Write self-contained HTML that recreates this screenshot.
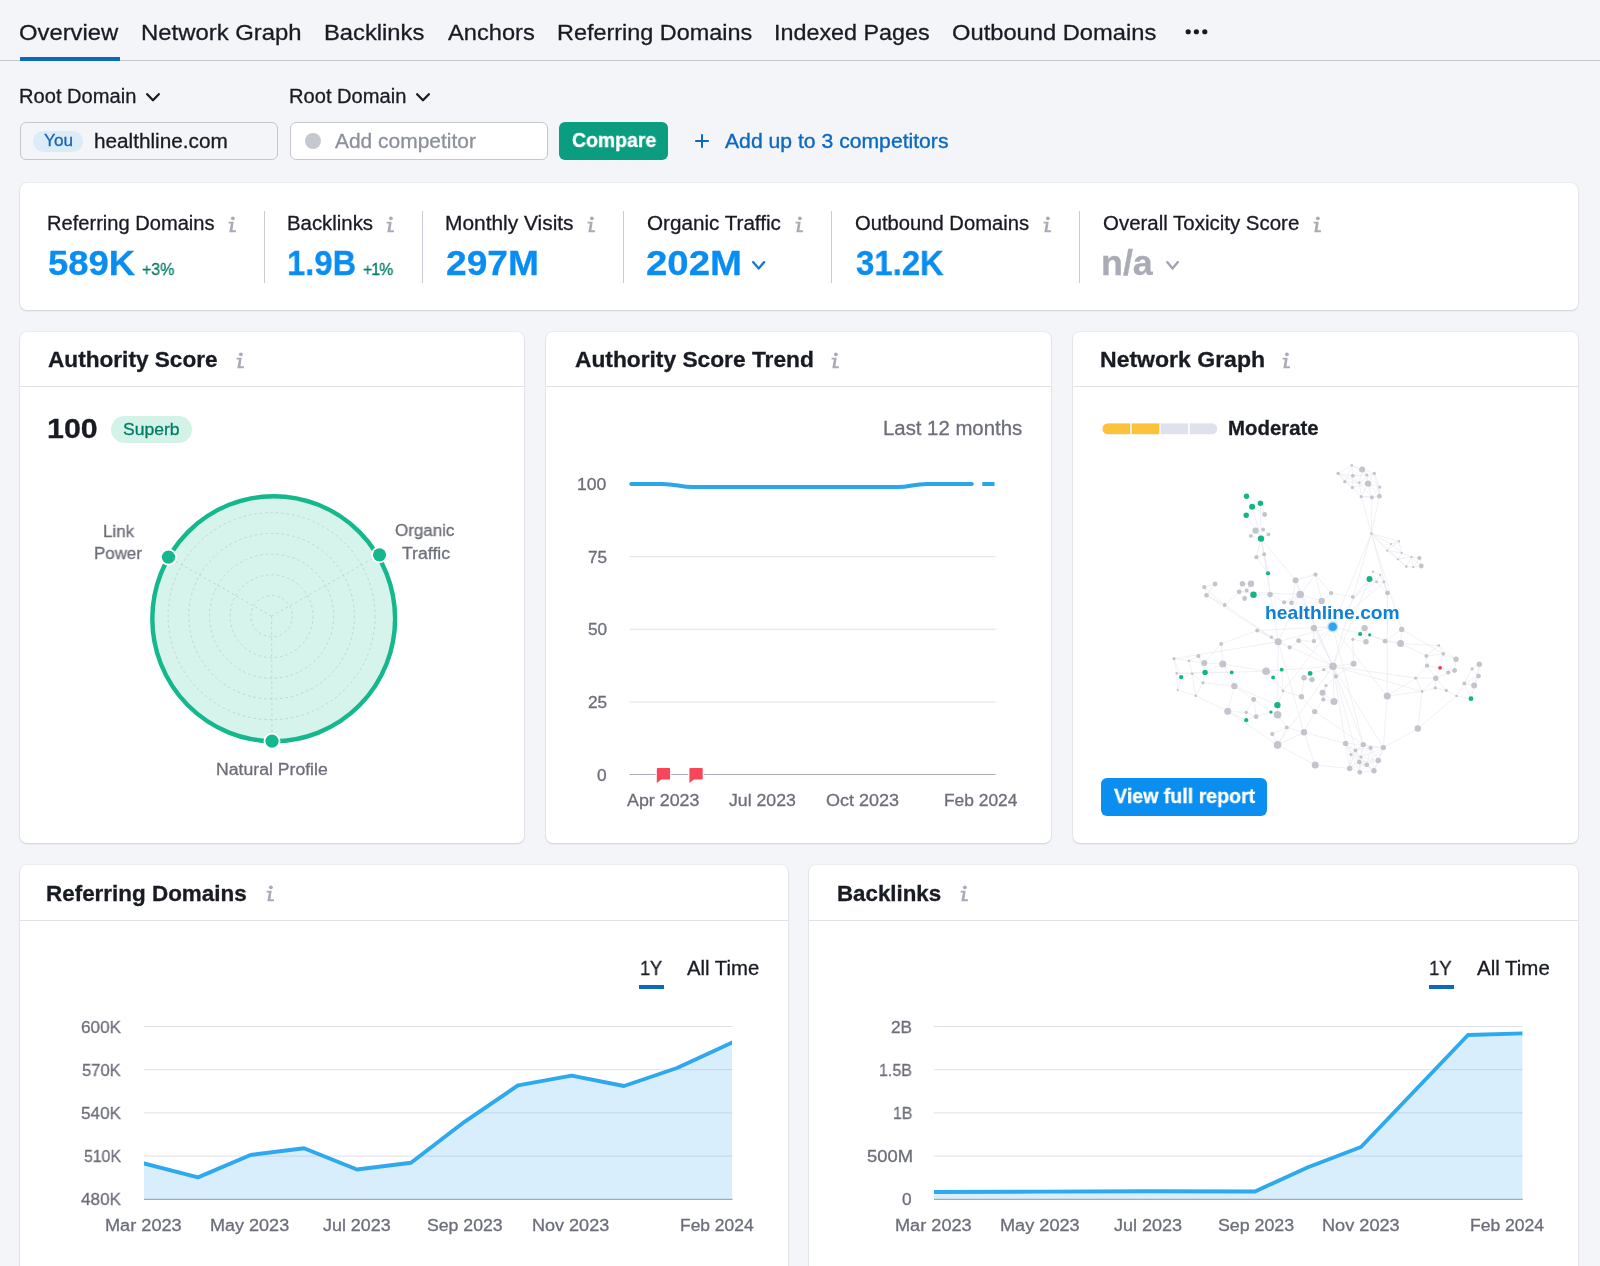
<!DOCTYPE html>
<html lang="en">
<head>
<meta charset="utf-8">
<title>Backlink Analytics: healthline.com – Overview</title>
<style>
*{box-sizing:border-box}
html,body{margin:0;padding:0;background:#f4f5f9}
body{width:1600px;height:1266px;overflow:hidden;font-family:"Liberation Sans", Arial, sans-serif;color:#191b23}
#app{position:relative;width:1600px;height:1266px;overflow:hidden;background:#f4f5f9}
.t{position:absolute;white-space:pre;line-height:1;display:block;transform-origin:0 0;will-change:transform;-webkit-text-stroke:0.3px currentColor}
.ico,.g{position:absolute;display:block;overflow:visible}
.g{left:0;top:0}
.abs{position:absolute}
.card{position:absolute;background:#fff;border-radius:7px;box-shadow:0 0 0 1px rgba(25,27,35,.035),0 1px 2px rgba(25,27,35,.13);overflow:hidden}
.hr{position:absolute;left:0;right:0;height:1px;background:#e0e1e9}
.sep{position:absolute;width:1px;background:#c9ccd4;top:27.5px;height:72px}
nav{position:absolute;left:0;top:0;width:1600px;height:61px;border-bottom:1px solid #c4c7cf}
nav .ul{position:absolute;left:20px;top:57px;width:99.5px;height:4px;background:#0b69c0}
.inp{position:absolute;height:38px;border:1px solid #c4c7cf;border-radius:6px}
.btn{position:absolute;border-radius:6px;border:0;padding:0;margin:0;font:inherit;color:inherit;display:block;cursor:pointer}
.pill{position:absolute;border-radius:14px}
</style>
</head>
<body>
<div id="app">
<nav>
<span class="t" style="left:18.94px;top:22px;font-size:22.5px;transform:scaleX(1.0586);">Overview</span>
<span class="t" style="left:141.44px;top:22px;font-size:22.5px;transform:scaleX(1.0615);">Network Graph</span>
<span class="t" style="left:323.94px;top:22px;font-size:22.5px;transform:scaleX(1.0556);">Backlinks</span>
<span class="t" style="left:448.00px;top:22px;font-size:22.5px;transform:scaleX(1.0512);">Anchors</span>
<span class="t" style="left:556.96px;top:22px;font-size:22.5px;transform:scaleX(1.0412);">Referring Domains</span>
<span class="t" style="left:773.93px;top:22px;font-size:22.5px;transform:scaleX(1.0367);">Indexed Pages</span>
<span class="t" style="left:951.95px;top:22px;font-size:22.5px;transform:scaleX(1.0539);">Outbound Domains</span>
<div class="ul"></div>
<svg class="ico" style="left:1183px;top:27px" width="28" height="10" viewBox="0 0 28 10"><g fill="#191b23"><circle cx="5.2" cy="4.75" r="2.6"/><circle cx="13.4" cy="4.75" r="2.6"/><circle cx="21.8" cy="4.75" r="2.6"/></g></svg>
</nav>
<div id="filters">
<div class="inp" style="left:20px;top:122px;width:258px;background:#f4f5f9"></div>
<div class="pill" style="left:32.5px;top:130.5px;width:50px;height:21px;background:#dcebf8"><span class="t" style="left:11.00px;top:1px;font-size:16.3px;transform:scaleX(1.0561);color:#1467b8;">You</span></div>
<div class="inp" style="left:289.5px;top:122px;width:258px;background:#fff"></div>
<div class="abs" style="left:304.6px;top:133px;width:16.2px;height:16.2px;border-radius:50%;background:#c6c8d0"></div>
<button type="button" class="btn" style="left:559px;top:122px;width:109px;height:38px;background:#0a9d80"><span class="t" style="left:12.80px;top:8px;font-size:20.3px;transform:scaleX(0.9574);font-weight:700;color:#ffffff;">Compare</span></button>
<svg class="ico" style="left:142.9px;top:90.2px" width="19.9" height="14.4" viewBox="142.9 90.2 19.9 14.4"><polyline points="147.1,94.4 152.9,100.4 158.7,94.4" fill="none" stroke="#191b23" stroke-width="2.3" stroke-linecap="round" stroke-linejoin="round"/></svg>
<svg class="ico" style="left:412.8px;top:90.2px" width="20.0" height="14.4" viewBox="412.8 90.2 20.0 14.4"><polyline points="416.9,94.4 422.8,100.4 428.7,94.4" fill="none" stroke="#191b23" stroke-width="2.3" stroke-linecap="round" stroke-linejoin="round"/></svg>
<svg class="ico" style="left:694px;top:133px" width="16" height="16" viewBox="0 0 16 16"><path d="M8 1.2V14.8M1.2 8H14.8" stroke="#0b69c0" stroke-width="2" fill="none"/></svg>
<span class="t" style="left:18.99px;top:86px;font-size:20px;transform:scaleX(1.0053);">Root Domain</span>
<span class="t" style="left:288.79px;top:86px;font-size:20px;transform:scaleX(1.0053);">Root Domain</span>
<span class="t" style="left:93.96px;top:131px;font-size:20px;transform:scaleX(1.0369);">healthline.com</span>
<span class="t" style="left:335.40px;top:131px;font-size:20.3px;transform:scaleX(1.0326);color:#8c909c;">Add competitor</span>
<span class="t" style="left:724.50px;top:131px;font-size:20px;transform:scaleX(1.0581);color:#0b69c0;-webkit-text-stroke:0.35px #0b69c0;">Add up to 3 competitors</span>
</div>
<section class="card" id="stats" style="left:20px;top:183px;width:1558px;height:127px;">
<div class="sep" style="left:243.8px"></div>
<div class="sep" style="left:402.1px"></div>
<div class="sep" style="left:602.9px"></div>
<div class="sep" style="left:810.8px"></div>
<div class="sep" style="left:1059.0px"></div>
<svg class="ico" style="left:207.5px;top:32.5px" width="9" height="17" viewBox="0 0 9 17"><circle cx="4.9" cy="2.3" r="1.9" fill="#a9abb6"/><path d="M0.6 5.7H5.7L4.4 14.3H7.9V16.2H1.3L2.9 7.6H0.6Z" fill="#a9abb6"/></svg>
<svg class="ico" style="left:366.0px;top:32.5px" width="9" height="17" viewBox="0 0 9 17"><circle cx="4.9" cy="2.3" r="1.9" fill="#a9abb6"/><path d="M0.6 5.7H5.7L4.4 14.3H7.9V16.2H1.3L2.9 7.6H0.6Z" fill="#a9abb6"/></svg>
<svg class="ico" style="left:567.0px;top:32.5px" width="9" height="17" viewBox="0 0 9 17"><circle cx="4.9" cy="2.3" r="1.9" fill="#a9abb6"/><path d="M0.6 5.7H5.7L4.4 14.3H7.9V16.2H1.3L2.9 7.6H0.6Z" fill="#a9abb6"/></svg>
<svg class="ico" style="left:774.5px;top:32.5px" width="9" height="17" viewBox="0 0 9 17"><circle cx="4.9" cy="2.3" r="1.9" fill="#a9abb6"/><path d="M0.6 5.7H5.7L4.4 14.3H7.9V16.2H1.3L2.9 7.6H0.6Z" fill="#a9abb6"/></svg>
<svg class="ico" style="left:1023.0px;top:32.5px" width="9" height="17" viewBox="0 0 9 17"><circle cx="4.9" cy="2.3" r="1.9" fill="#a9abb6"/><path d="M0.6 5.7H5.7L4.4 14.3H7.9V16.2H1.3L2.9 7.6H0.6Z" fill="#a9abb6"/></svg>
<svg class="ico" style="left:1292.5px;top:32.5px" width="9" height="17" viewBox="0 0 9 17"><circle cx="4.9" cy="2.3" r="1.9" fill="#a9abb6"/><path d="M0.6 5.7H5.7L4.4 14.3H7.9V16.2H1.3L2.9 7.6H0.6Z" fill="#a9abb6"/></svg>
<svg class="ico" style="left:729.0px;top:75.2px" width="19.4" height="14.6" viewBox="749.0 258.2 19.4 14.6"><polyline points="753.1,262.3 758.7,268.7 764.2,262.3" fill="none" stroke="#1479d0" stroke-width="2.3" stroke-linecap="round" stroke-linejoin="round"/></svg>
<svg class="ico" style="left:1142.5px;top:75.2px" width="19.1" height="14.6" viewBox="1162.5 258.2 19.1 14.6"><polyline points="1166.7,262.3 1172.0,268.7 1177.4,262.3" fill="none" stroke="#a0a3ae" stroke-width="2.3" stroke-linecap="round" stroke-linejoin="round"/></svg>
<span class="t" style="left:27.00px;top:30px;font-size:20px;transform:scaleX(1.0047);">Referring Domains</span>
<span class="t" style="left:266.98px;top:30px;font-size:20px;transform:scaleX(1.0183);">Backlinks</span>
<span class="t" style="left:425.20px;top:30px;font-size:20px;transform:scaleX(1.0450);">Monthly Visits</span>
<span class="t" style="left:627.00px;top:30px;font-size:20px;transform:scaleX(1.0324);">Organic Traffic</span>
<span class="t" style="left:835.00px;top:30px;font-size:20px;transform:scaleX(1.0097);">Outbound Domains</span>
<span class="t" style="left:1083.00px;top:30px;font-size:20px;transform:scaleX(1.0226);">Overall Toxicity Score</span>
<span class="t" style="left:27.71px;top:62px;font-size:35px;transform:scaleX(1.0407);font-weight:700;color:#0a8df2;">589K</span>
<span class="t" style="left:266.63px;top:62px;font-size:35px;transform:scaleX(0.9341);font-weight:700;color:#0a8df2;">1.9B</span>
<span class="t" style="left:426.04px;top:62px;font-size:35px;transform:scaleX(1.0605);font-weight:700;color:#0a8df2;">297M</span>
<span class="t" style="left:626.40px;top:62px;font-size:35px;transform:scaleX(1.0960);font-weight:700;color:#0a8df2;">202M</span>
<span class="t" style="left:835.50px;top:62px;font-size:35px;transform:scaleX(0.9396);font-weight:700;color:#0a8df2;">31.2K</span>
<span class="t" style="left:1081.45px;top:62px;font-size:35px;transform:scaleX(1.0233);font-weight:700;color:#a9abb6;">n/a</span>
<span class="t" style="left:122.20px;top:78px;font-size:17.3px;transform:scaleX(0.9221);color:#007c65;">+3%</span>
<span class="t" style="left:342.50px;top:78px;font-size:17.3px;transform:scaleX(0.9200);letter-spacing:-1.047px;color:#007c65;">+1%</span>
</section>
<section class="card" id="authority-score" style="left:20px;top:332px;width:504px;height:511px;">
<div class="hr" style="top:54px"></div>
<svg class="ico" style="left:215.5px;top:19.5px" width="9" height="17" viewBox="0 0 9 17"><circle cx="4.9" cy="2.3" r="1.9" fill="#a9abb6"/><path d="M0.6 5.7H5.7L4.4 14.3H7.9V16.2H1.3L2.9 7.6H0.6Z" fill="#a9abb6"/></svg>
<div class="pill" style="left:90.5px;top:83.5px;width:81.5px;height:27px;background:#d3f3e9"><span class="t" style="left:12.50px;top:5px;font-size:17.3px;transform:scaleX(1.0161);color:#007c65;">Superb</span></div>
<svg class="g" width="504" height="511" viewBox="20 332 504 511">
<ellipse cx="273.7" cy="618.7" rx="121.4" ry="122.5" fill="#d6f4eb"/>
<g fill="none" stroke="#b9dcd2" stroke-width="1" stroke-dasharray="2.6 2.8">
<circle cx="271.6" cy="616.2" r="20.7"/>
<circle cx="271.6" cy="616.2" r="41.4"/>
<circle cx="271.6" cy="616.2" r="62.1"/>
<circle cx="271.6" cy="616.2" r="82.8"/>
<circle cx="271.6" cy="616.2" r="103.5"/>
<line x1="271.6" y1="616.2" x2="168.5" y2="557.2"/>
<line x1="271.6" y1="616.2" x2="379.5" y2="554.8"/>
<line x1="271.6" y1="616.2" x2="272.0" y2="741.2"/>
</g>
<ellipse cx="273.7" cy="618.7" rx="121.4" ry="122.5" fill="none" stroke="#14b88c" stroke-width="4.4"/>
<circle cx="168.5" cy="557.2" r="8.4" fill="#fff"/><circle cx="168.5" cy="557.2" r="6.6" fill="#14b88c"/>
<circle cx="379.5" cy="554.8" r="8.4" fill="#fff"/><circle cx="379.5" cy="554.8" r="6.6" fill="#14b88c"/>
<circle cx="272.0" cy="741.2" r="8.4" fill="#fff"/><circle cx="272.0" cy="741.2" r="6.6" fill="#14b88c"/>
</svg>
<span class="t" style="left:28.00px;top:17px;font-size:21.8px;transform:scaleX(1.0375);font-weight:700;">Authority Score</span>
<span class="t" style="left:27.41px;top:83px;font-size:28px;transform:scaleX(1.0854);font-weight:700;">100</span>
<span class="t" style="left:82.92px;top:191px;font-size:17.3px;transform:scaleX(0.9819);color:#6c6e79;">Link</span>
<span class="t" style="left:74.42px;top:213px;font-size:17.3px;transform:scaleX(0.9787);color:#6c6e79;">Power</span>
<span class="t" style="left:375.20px;top:190px;font-size:17.3px;transform:scaleX(0.9824);color:#6c6e79;">Organic</span>
<span class="t" style="left:381.80px;top:213px;font-size:17.3px;transform:scaleX(1.0209);color:#6c6e79;">Traffic</span>
<span class="t" style="left:195.88px;top:429px;font-size:17.3px;transform:scaleX(1.0206);color:#6c6e79;">Natural Profile</span>
</section>
<section class="card" id="authority-trend" style="left:546px;top:332px;width:505px;height:511px;">
<div class="hr" style="top:54px"></div>
<svg class="ico" style="left:284.7px;top:19.5px" width="9" height="17" viewBox="0 0 9 17"><circle cx="4.9" cy="2.3" r="1.9" fill="#a9abb6"/><path d="M0.6 5.7H5.7L4.4 14.3H7.9V16.2H1.3L2.9 7.6H0.6Z" fill="#a9abb6"/></svg>
<svg class="g" width="505" height="511" viewBox="546 332 505 511">
<line x1="629.4" x2="995.5" y1="556.7" y2="556.7" stroke="#e0e1e9" stroke-width="1"/>
<line x1="629.4" x2="995.5" y1="629.2" y2="629.2" stroke="#e0e1e9" stroke-width="1"/>
<line x1="629.4" x2="995.5" y1="702.0" y2="702.0" stroke="#e0e1e9" stroke-width="1"/>
<line x1="629.4" x2="995.5" y1="774.5" y2="774.5" stroke="#a9abb6" stroke-width="1"/>
<path d="M631.2 483.9 H662 C676 483.9 680 487.1 693 487.1 H897 C911 487.1 913 483.9 927 483.9 H971.8" fill="none" stroke="#2ba6ea" stroke-width="4" stroke-linecap="round"/>
<path d="M982.3 483.9 H994.5" fill="none" stroke="#2ba6ea" stroke-width="4"/>
<path d="M656.8 769.1 a1 1 0 0 1 1 -1 h11.3 a1 1 0 0 1 1 1 v9.5 a1 1 0 0 1 -1 1 h-7.8 l-4.5 3.5 z" fill="#f7455a" stroke="#fff" stroke-width="2.4" paint-order="stroke" stroke-linejoin="round"/>
<path d="M689.4 769.1 a1 1 0 0 1 1 -1 h11.3 a1 1 0 0 1 1 1 v9.5 a1 1 0 0 1 -1 1 h-7.8 l-4.5 3.5 z" fill="#f7455a" stroke="#fff" stroke-width="2.4" paint-order="stroke" stroke-linejoin="round"/>
</svg>
<span class="t" style="left:28.80px;top:17px;font-size:21.8px;transform:scaleX(1.0436);font-weight:700;">Authority Score Trend</span>
<span class="t" style="left:337.48px;top:86px;font-size:20px;transform:scaleX(1.0173);color:#6c6e79;">Last 12 months</span>
<span class="t" style="left:31.28px;top:144px;font-size:17.3px;transform:scaleX(1.0176);color:#6c6e79;">100</span>
<span class="t" style="left:41.50px;top:217px;font-size:17.3px;transform:scaleX(0.9940);color:#6c6e79;">75</span>
<span class="t" style="left:41.50px;top:289px;font-size:17.3px;transform:scaleX(0.9940);color:#6c6e79;">50</span>
<span class="t" style="left:41.50px;top:362px;font-size:17.3px;transform:scaleX(0.9940);color:#6c6e79;">25</span>
<span class="t" style="left:51.00px;top:435px;font-size:17.3px;color:#6c6e79;">0</span>
<span class="t" style="left:80.60px;top:460px;font-size:17.3px;transform:scaleX(1.0327);color:#6c6e79;">Apr 2023</span>
<span class="t" style="left:182.75px;top:460px;font-size:17.3px;transform:scaleX(1.0236);color:#6c6e79;">Jul 2023</span>
<span class="t" style="left:279.60px;top:460px;font-size:17.3px;transform:scaleX(1.0415);color:#6c6e79;">Oct 2023</span>
<span class="t" style="left:397.99px;top:460px;font-size:17.3px;transform:scaleX(1.0054);color:#6c6e79;">Feb 2024</span>
</section>
<section class="card" id="network-graph" style="left:1073px;top:332px;width:505px;height:511px;">
<div class="hr" style="top:54px"></div>
<svg class="ico" style="left:209.2px;top:19.5px" width="9" height="17" viewBox="0 0 9 17"><circle cx="4.9" cy="2.3" r="1.9" fill="#a9abb6"/><path d="M0.6 5.7H5.7L4.4 14.3H7.9V16.2H1.3L2.9 7.6H0.6Z" fill="#a9abb6"/></svg>
<svg class="g" width="505" height="511" viewBox="1073 332 505 511">
<clipPath id="mclip"><rect x="1102.4" y="423.2" width="114.9" height="11.2" rx="5.6"/></clipPath><g clip-path="url(#mclip)">
<rect x="1102.2" y="423.2" width="28.0" height="11.2" fill="#fbc23c"/>
<rect x="1131.8" y="423.2" width="27.6" height="11.2" fill="#fbc23c"/>
<rect x="1160.6" y="423.2" width="27.5" height="11.2" fill="#dfe1ec"/>
<rect x="1189.7" y="423.2" width="27.7" height="11.2" fill="#dfe1ec"/>
</g>
<g stroke="#eaebef" stroke-width="0.7" fill="none">
<path d="M1246.5 496.2L1252.1 506.7M1246.5 496.2L1260.4 503.2M1252.1 506.7L1260.4 503.2M1252.1 506.7L1246.2 515.3M1252.1 506.7L1261.0 538.6M1252.1 506.7L1264.7 514.5M1260.4 503.2L1261.0 538.6M1260.4 503.2L1264.7 514.5M1246.2 515.3L1255.6 530.6M1261.0 538.6L1268.0 573.3M1261.0 538.6L1255.6 530.6M1261.0 538.6L1263.1 529.5M1261.0 538.6L1250.8 535.9M1261.0 538.6L1268.5 534.3M1261.0 538.6L1264.2 554.2M1261.0 538.6L1256.4 557.2M1261.0 538.6L1295.6 580.3M1261.0 538.6L1278.2 641.8M1268.0 573.3L1264.2 554.2M1268.0 573.3L1256.4 557.2M1268.0 573.3L1270.1 594.5M1253.5 594.8L1246.7 590.5M1253.5 594.8L1244.6 598.5M1253.5 594.8L1270.1 594.5M1369.5 578.9L1373.0 571.7M1369.5 578.9L1376.5 581.9M1369.5 578.9L1352.8 596.9M1369.5 578.9L1333.0 666.2M1369.5 578.9L1332.7 626.7M1360.1 634.0L1364.6 628.1M1360.1 634.0L1352.8 639.3M1360.1 634.0L1366.0 641.8M1369.7 634.8L1364.6 628.1M1369.7 634.8L1366.0 641.8M1369.7 634.8L1385.1 641.2M1205.1 672.4L1231.7 672.4M1205.1 672.4L1198.4 656.0M1205.1 672.4L1204.3 663.0M1205.1 672.4L1222.8 664.0M1205.1 672.4L1192.2 673.7M1205.1 672.4L1203.0 682.8M1231.7 672.4L1222.8 664.0M1231.7 672.4L1234.4 686.1M1181.2 677.2L1174.0 658.7M1181.2 677.2L1176.7 673.2M1181.2 677.2L1192.2 673.7M1181.2 677.2L1177.7 690.1M1281.7 669.7L1273.1 677.5M1281.7 669.7L1266.1 671.3M1281.7 669.7L1283.0 690.9M1273.1 677.5L1266.1 671.3M1273.1 677.5L1283.0 690.9M1310.1 673.4L1323.8 669.7M1310.1 673.4L1304.0 677.7M1310.1 673.4L1312.0 679.6M1277.4 705.1L1270.9 712.1M1277.4 705.1L1234.4 686.1M1277.4 705.1L1283.0 690.9M1277.4 705.1L1277.6 714.8M1270.9 712.1L1253.7 699.5M1270.9 712.1L1256.1 716.7M1270.9 712.1L1277.6 714.8M1246.2 720.2L1227.7 711.3M1246.2 720.2L1246.2 712.4M1246.2 720.2L1256.1 716.7M1471.0 698.7L1464.3 683.4M1471.0 698.7L1474.2 685.5M1471.0 698.7L1456.5 696.0M1440.1 667.8L1443.3 653.8M1440.1 667.8L1427.0 665.7M1440.1 667.8L1454.6 670.5M1440.1 667.8L1448.2 672.6M1440.1 667.8L1435.8 678.3M1351.8 465.3L1362.2 469.6M1351.8 465.3L1338.1 473.4M1351.8 465.3L1352.8 475.8M1351.8 465.3L1366.8 475.0M1351.8 465.3L1344.8 481.7M1362.2 469.6L1374.3 473.4M1362.2 469.6L1352.8 475.8M1362.2 469.6L1366.8 475.0M1362.2 469.6L1359.3 482.8M1338.1 473.4L1352.8 475.8M1338.1 473.4L1344.8 481.7M1338.1 473.4L1359.3 482.8M1338.1 473.4L1352.3 487.6M1374.3 473.4L1366.8 475.0M1374.3 473.4L1368.1 483.6M1374.3 473.4L1359.3 482.8M1374.3 473.4L1379.7 487.1M1374.3 473.4L1379.4 496.2M1352.8 475.8L1366.8 475.0M1352.8 475.8L1344.8 481.7M1352.8 475.8L1359.3 482.8M1352.8 475.8L1352.3 487.6M1366.8 475.0L1368.1 483.6M1366.8 475.0L1359.3 482.8M1366.8 475.0L1379.7 487.1M1344.8 481.7L1359.3 482.8M1344.8 481.7L1352.3 487.6M1368.1 483.6L1359.3 482.8M1368.1 483.6L1352.3 487.6M1368.1 483.6L1379.7 487.1M1368.1 483.6L1361.2 496.7M1368.1 483.6L1371.9 497.5M1368.1 483.6L1379.4 496.2M1359.3 482.8L1352.3 487.6M1359.3 482.8L1361.2 496.7M1359.3 482.8L1371.9 497.5M1352.3 487.6L1361.2 496.7M1379.7 487.1L1371.9 497.5M1379.7 487.1L1379.4 496.2M1361.2 496.7L1371.9 497.5M1361.2 496.7L1379.4 496.2M1361.2 496.7L1371.4 533.5M1371.9 497.5L1379.4 496.2M1371.9 497.5L1371.4 533.5M1379.4 496.2L1371.4 533.5M1255.6 530.6L1263.1 529.5M1255.6 530.6L1250.8 535.9M1263.1 529.5L1268.5 534.3M1264.2 554.2L1256.4 557.2M1371.4 533.5L1391.0 544.0M1371.4 533.5L1399.0 541.3M1371.4 533.5L1387.2 550.7M1371.4 533.5L1406.3 566.6M1371.4 533.5L1387.5 593.1M1371.4 533.5L1401.7 629.4M1371.4 533.5L1333.0 666.2M1371.4 533.5L1332.7 626.7M1391.0 544.0L1399.0 541.3M1391.0 544.0L1387.2 550.7M1391.0 544.0L1401.7 552.9M1399.0 541.3L1387.2 550.7M1399.0 541.3L1401.7 552.9M1387.2 550.7L1401.7 552.9M1387.2 550.7L1397.9 559.3M1401.7 552.9L1397.9 559.3M1401.7 552.9L1411.4 556.9M1397.9 559.3L1411.4 556.9M1397.9 559.3L1406.3 566.6M1411.4 556.9L1419.4 558.0M1411.4 556.9L1406.3 566.6M1411.4 556.9L1413.3 567.1M1411.4 556.9L1421.3 566.0M1419.4 558.0L1413.3 567.1M1419.4 558.0L1421.3 566.0M1406.3 566.6L1413.3 567.1M1413.3 567.1L1421.3 566.0M1373.0 571.7L1380.2 574.9M1373.0 571.7L1376.5 581.9M1380.2 574.9L1376.5 581.9M1380.2 574.9L1384.0 581.9M1380.2 574.9L1387.5 593.1M1376.5 581.9L1384.0 581.9M1376.5 581.9L1352.8 596.9M1376.5 581.9L1387.5 593.1M1384.0 581.9L1387.5 593.1M1384.0 581.9L1332.7 626.7M1315.5 574.6L1295.6 580.3M1315.5 574.6L1300.2 594.5M1315.5 574.6L1331.1 593.1M1315.5 574.6L1321.7 600.9M1295.6 580.3L1300.2 594.5M1295.6 580.3L1291.6 602.8M1295.6 580.3L1333.0 666.2M1251.0 583.7L1242.4 583.7M1251.0 583.7L1246.7 590.5M1242.4 583.7L1239.2 591.8M1242.4 583.7L1246.7 590.5M1215.1 584.0L1204.3 587.2M1215.1 584.0L1206.5 595.3M1204.3 587.2L1206.5 595.3M1204.3 587.2L1224.7 605.0M1206.5 595.3L1224.7 605.0M1206.5 595.3L1278.2 641.8M1239.2 591.8L1246.7 590.5M1239.2 591.8L1244.6 598.5M1239.2 591.8L1224.7 605.0M1239.2 591.8L1300.2 594.5M1246.7 590.5L1244.6 598.5M1270.1 594.5L1284.1 602.3M1224.7 605.0L1278.2 641.8M1300.2 594.5L1321.7 600.9M1300.2 594.5L1284.1 602.3M1300.2 594.5L1291.6 602.8M1300.2 594.5L1278.2 641.8M1300.2 594.5L1333.0 666.2M1300.2 594.5L1332.7 626.7M1331.1 593.1L1321.7 600.9M1331.1 593.1L1352.8 596.9M1387.5 593.1L1387.2 696.0M1284.1 602.3L1291.6 602.8M1313.9 628.1L1313.9 641.2M1313.9 628.1L1333.0 666.2M1313.9 628.1L1332.7 626.7M1364.6 628.1L1366.0 641.8M1401.7 629.4L1385.1 641.2M1401.7 629.4L1400.6 643.6M1401.7 629.4L1443.3 653.8M1257.2 630.5L1271.5 637.2M1257.2 630.5L1278.2 641.8M1257.2 630.5L1221.2 643.9M1257.2 630.5L1332.7 626.7M1271.5 637.2L1278.2 641.8M1278.2 641.8L1289.7 647.4M1278.2 641.8L1333.0 666.2M1278.2 641.8L1174.0 658.7M1278.2 641.8L1277.6 714.8M1278.2 641.8L1304.0 732.3M1278.2 641.8L1332.7 626.7M1298.6 640.7L1313.9 641.2M1298.6 640.7L1289.7 647.4M1298.6 640.7L1333.0 666.2M1313.9 641.2L1332.7 626.7M1352.8 639.3L1366.0 641.8M1352.8 639.3L1353.6 663.8M1385.1 641.2L1400.6 643.6M1400.6 643.6L1438.8 645.5M1400.6 643.6L1426.4 656.0M1400.6 643.6L1332.7 626.7M1221.2 643.9L1204.3 663.0M1221.2 643.9L1222.8 664.0M1333.0 666.2L1353.6 663.8M1333.0 666.2L1323.8 669.7M1333.0 666.2L1335.9 676.4M1333.0 666.2L1266.1 671.3M1333.0 666.2L1334.0 701.6M1333.0 666.2L1277.6 744.9M1333.0 666.2L1415.7 678.0M1333.0 666.2L1422.1 691.4M1333.0 666.2L1345.6 743.5M1333.0 666.2L1363.3 744.6M1333.0 666.2L1383.4 747.6M1333.0 666.2L1355.5 750.3M1353.6 663.8L1335.9 676.4M1323.8 669.7L1335.9 676.4M1335.9 676.4L1326.0 685.5M1266.1 671.3L1222.8 664.0M1266.1 671.3L1176.7 673.2M1304.0 677.7L1312.0 679.6M1304.0 677.7L1301.5 696.8M1174.0 658.7L1189.0 660.8M1174.0 658.7L1176.7 673.2M1189.0 660.8L1198.4 656.0M1189.0 660.8L1204.3 663.0M1189.0 660.8L1192.2 673.7M1198.4 656.0L1204.3 663.0M1204.3 663.0L1222.8 664.0M1222.8 664.0L1234.4 686.1M1176.7 673.2L1192.2 673.7M1176.7 673.2L1177.7 690.1M1192.2 673.7L1203.0 682.8M1192.2 673.7L1195.7 695.7M1203.0 682.8L1195.7 695.7M1203.0 682.8L1234.4 686.1M1177.7 690.1L1195.7 695.7M1195.7 695.7L1227.7 711.3M1234.4 686.1L1253.7 699.5M1234.4 686.1L1227.7 711.3M1326.0 685.5L1322.5 692.8M1326.0 685.5L1323.3 699.5M1322.5 692.8L1323.3 699.5M1322.5 692.8L1334.0 701.6M1301.5 696.8L1283.0 690.9M1301.5 696.8L1314.7 711.6M1323.3 699.5L1334.0 701.6M1323.3 699.5L1314.7 711.6M1253.7 699.5L1246.2 712.4M1253.7 699.5L1256.1 716.7M1283.0 690.9L1332.7 626.7M1314.7 711.6L1304.0 732.3M1314.7 711.6L1363.3 744.6M1227.7 711.3L1246.2 712.4M1227.7 711.3L1277.6 744.9M1246.2 712.4L1256.1 716.7M1277.6 714.8L1286.8 727.4M1286.8 727.4L1272.3 734.1M1286.8 727.4L1304.0 732.3M1286.8 727.4L1277.6 744.9M1272.3 734.1L1277.6 744.9M1304.0 732.3L1277.6 744.9M1304.0 732.3L1315.2 765.0M1304.0 732.3L1345.6 743.5M1277.6 744.9L1315.2 765.0M1315.2 765.0L1349.6 768.5M1387.2 696.0L1415.7 678.0M1387.2 696.0L1422.1 691.4M1387.2 696.0L1383.4 747.6M1387.2 696.0L1332.7 626.7M1417.8 728.5L1422.1 691.4M1417.8 728.5L1456.5 696.0M1417.8 728.5L1383.4 747.6M1438.8 645.5L1443.3 653.8M1438.8 645.5L1426.4 656.0M1438.8 645.5L1456.0 659.2M1443.3 653.8L1426.4 656.0M1443.3 653.8L1456.0 659.2M1426.4 656.0L1427.0 665.7M1456.0 659.2L1454.6 670.5M1456.0 659.2L1448.2 672.6M1427.0 665.7L1435.8 678.3M1427.0 665.7L1415.7 678.0M1479.3 664.3L1472.1 668.9M1479.3 664.3L1478.5 676.1M1479.3 664.3L1474.2 685.5M1472.1 668.9L1478.5 676.1M1472.1 668.9L1464.3 683.4M1454.6 670.5L1448.2 672.6M1448.2 672.6L1435.8 678.3M1478.5 676.1L1464.3 683.4M1478.5 676.1L1474.2 685.5M1435.8 678.3L1415.7 678.0M1435.8 678.3L1435.3 687.9M1435.8 678.3L1446.3 690.4M1435.8 678.3L1422.1 691.4M1415.7 678.0L1422.1 691.4M1464.3 683.4L1474.2 685.5M1464.3 683.4L1456.5 696.0M1435.3 687.9L1446.3 690.4M1435.3 687.9L1422.1 691.4M1446.3 690.4L1456.5 696.0M1345.6 743.5L1363.3 744.6M1345.6 743.5L1355.5 750.3M1345.6 743.5L1350.9 754.6M1345.6 743.5L1360.9 757.0M1345.6 743.5L1359.3 762.1M1345.6 743.5L1349.6 768.5M1363.3 744.6L1370.6 747.8M1363.3 744.6L1383.4 747.6M1363.3 744.6L1355.5 750.3M1363.3 744.6L1350.9 754.6M1363.3 744.6L1360.9 757.0M1363.3 744.6L1359.3 762.1M1363.3 744.6L1332.7 626.7M1370.6 747.8L1383.4 747.6M1370.6 747.8L1355.5 750.3M1370.6 747.8L1360.9 757.0M1370.6 747.8L1366.8 764.8M1370.6 747.8L1378.3 760.5M1370.6 747.8L1374.0 770.7M1383.4 747.6L1360.9 757.0M1383.4 747.6L1366.8 764.8M1383.4 747.6L1378.3 760.5M1383.4 747.6L1374.0 770.7M1355.5 750.3L1350.9 754.6M1355.5 750.3L1360.9 757.0M1355.5 750.3L1359.3 762.1M1355.5 750.3L1349.6 768.5M1350.9 754.6L1360.9 757.0M1350.9 754.6L1359.3 762.1M1350.9 754.6L1349.6 768.5M1350.9 754.6L1359.8 772.3M1360.9 757.0L1359.3 762.1M1360.9 757.0L1366.8 764.8M1360.9 757.0L1378.3 760.5M1360.9 757.0L1349.6 768.5M1360.9 757.0L1359.8 772.3M1360.9 757.0L1374.0 770.7M1359.3 762.1L1366.8 764.8M1359.3 762.1L1378.3 760.5M1359.3 762.1L1349.6 768.5M1359.3 762.1L1359.8 772.3M1359.3 762.1L1374.0 770.7M1366.8 764.8L1378.3 760.5M1366.8 764.8L1349.6 768.5M1366.8 764.8L1359.8 772.3M1366.8 764.8L1374.0 770.7M1378.3 760.5L1374.0 770.7M1349.6 768.5L1359.8 772.3M1359.8 772.3L1374.0 770.7"/>
</g>
<g fill="#c3c4cc"><circle cx="1351.8" cy="465.3" r="1.3"/><circle cx="1362.2" cy="469.6" r="3.0"/><circle cx="1338.1" cy="473.4" r="1.6"/><circle cx="1374.3" cy="473.4" r="1.6"/><circle cx="1352.8" cy="475.8" r="1.9"/><circle cx="1366.8" cy="475.0" r="1.6"/><circle cx="1344.8" cy="481.7" r="1.6"/><circle cx="1368.1" cy="483.6" r="3.2"/><circle cx="1359.3" cy="482.8" r="1.3"/><circle cx="1352.3" cy="487.6" r="1.6"/><circle cx="1379.7" cy="487.1" r="1.6"/><circle cx="1361.2" cy="496.7" r="1.6"/><circle cx="1371.9" cy="497.5" r="1.9"/><circle cx="1379.4" cy="496.2" r="2.4"/><circle cx="1264.7" cy="514.5" r="2.4"/><circle cx="1255.6" cy="530.6" r="3.2"/><circle cx="1263.1" cy="529.5" r="1.9"/><circle cx="1250.8" cy="535.9" r="1.9"/><circle cx="1268.5" cy="534.3" r="1.9"/><circle cx="1264.2" cy="554.2" r="1.9"/><circle cx="1256.4" cy="557.2" r="2.1"/><circle cx="1371.4" cy="533.5" r="1.3"/><circle cx="1391.0" cy="544.0" r="1.1"/><circle cx="1399.0" cy="541.3" r="1.1"/><circle cx="1387.2" cy="550.7" r="1.1"/><circle cx="1401.7" cy="552.9" r="1.1"/><circle cx="1397.9" cy="559.3" r="1.1"/><circle cx="1411.4" cy="556.9" r="1.1"/><circle cx="1419.4" cy="558.0" r="2.1"/><circle cx="1406.3" cy="566.6" r="1.3"/><circle cx="1413.3" cy="567.1" r="1.1"/><circle cx="1421.3" cy="566.0" r="2.4"/><circle cx="1373.0" cy="571.7" r="1.1"/><circle cx="1380.2" cy="574.9" r="1.1"/><circle cx="1376.5" cy="581.9" r="1.3"/><circle cx="1384.0" cy="581.9" r="1.3"/><circle cx="1315.5" cy="574.6" r="2.1"/><circle cx="1295.6" cy="580.3" r="3.0"/><circle cx="1251.0" cy="583.7" r="3.2"/><circle cx="1242.4" cy="583.7" r="2.7"/><circle cx="1215.1" cy="584.0" r="2.4"/><circle cx="1204.3" cy="587.2" r="2.1"/><circle cx="1206.5" cy="595.3" r="2.4"/><circle cx="1239.2" cy="591.8" r="2.4"/><circle cx="1246.7" cy="590.5" r="1.9"/><circle cx="1244.6" cy="598.5" r="2.4"/><circle cx="1270.1" cy="594.5" r="2.7"/><circle cx="1224.7" cy="605.0" r="1.9"/><circle cx="1300.2" cy="594.5" r="3.8"/><circle cx="1331.1" cy="593.1" r="2.1"/><circle cx="1321.7" cy="600.9" r="3.2"/><circle cx="1352.8" cy="596.9" r="1.9"/><circle cx="1387.5" cy="593.1" r="2.4"/><circle cx="1284.1" cy="602.3" r="2.1"/><circle cx="1291.6" cy="602.8" r="2.4"/><circle cx="1313.9" cy="628.1" r="3.2"/><circle cx="1364.6" cy="628.1" r="3.2"/><circle cx="1401.7" cy="629.4" r="2.7"/><circle cx="1257.2" cy="630.5" r="1.9"/><circle cx="1271.5" cy="637.2" r="1.6"/><circle cx="1278.2" cy="641.8" r="3.5"/><circle cx="1298.6" cy="640.7" r="2.4"/><circle cx="1313.9" cy="641.2" r="2.1"/><circle cx="1352.8" cy="639.3" r="1.6"/><circle cx="1366.0" cy="641.8" r="2.7"/><circle cx="1385.1" cy="641.2" r="2.4"/><circle cx="1400.6" cy="643.6" r="3.5"/><circle cx="1221.2" cy="643.9" r="1.9"/><circle cx="1289.7" cy="647.4" r="2.1"/><circle cx="1333.0" cy="666.2" r="3.8"/><circle cx="1353.6" cy="663.8" r="3.0"/><circle cx="1323.8" cy="669.7" r="1.6"/><circle cx="1335.9" cy="676.4" r="2.1"/><circle cx="1266.1" cy="671.3" r="3.8"/><circle cx="1304.0" cy="677.7" r="2.7"/><circle cx="1312.0" cy="679.6" r="2.7"/><circle cx="1174.0" cy="658.7" r="1.6"/><circle cx="1189.0" cy="660.8" r="1.3"/><circle cx="1198.4" cy="656.0" r="2.1"/><circle cx="1204.3" cy="663.0" r="3.0"/><circle cx="1222.8" cy="664.0" r="3.5"/><circle cx="1176.7" cy="673.2" r="1.3"/><circle cx="1192.2" cy="673.7" r="1.3"/><circle cx="1203.0" cy="682.8" r="1.6"/><circle cx="1177.7" cy="690.1" r="1.1"/><circle cx="1195.7" cy="695.7" r="1.3"/><circle cx="1234.4" cy="686.1" r="3.2"/><circle cx="1326.0" cy="685.5" r="1.6"/><circle cx="1322.5" cy="692.8" r="3.0"/><circle cx="1301.5" cy="696.8" r="2.7"/><circle cx="1323.3" cy="699.5" r="2.1"/><circle cx="1334.0" cy="701.6" r="3.5"/><circle cx="1253.7" cy="699.5" r="2.4"/><circle cx="1283.0" cy="690.9" r="1.3"/><circle cx="1314.7" cy="711.6" r="2.7"/><circle cx="1227.7" cy="711.3" r="3.5"/><circle cx="1246.2" cy="712.4" r="1.6"/><circle cx="1256.1" cy="716.7" r="2.4"/><circle cx="1277.6" cy="714.8" r="3.8"/><circle cx="1286.8" cy="727.4" r="1.9"/><circle cx="1272.3" cy="734.1" r="2.1"/><circle cx="1304.0" cy="732.3" r="3.2"/><circle cx="1277.6" cy="744.9" r="3.8"/><circle cx="1315.2" cy="765.0" r="3.5"/><circle cx="1387.2" cy="696.0" r="3.5"/><circle cx="1417.8" cy="728.5" r="3.2"/><circle cx="1438.8" cy="645.5" r="1.3"/><circle cx="1443.3" cy="653.8" r="1.9"/><circle cx="1426.4" cy="656.0" r="1.9"/><circle cx="1456.0" cy="659.2" r="2.7"/><circle cx="1427.0" cy="665.7" r="2.1"/><circle cx="1479.3" cy="664.3" r="2.7"/><circle cx="1472.1" cy="668.9" r="1.6"/><circle cx="1454.6" cy="670.5" r="2.4"/><circle cx="1448.2" cy="672.6" r="2.1"/><circle cx="1478.5" cy="676.1" r="2.4"/><circle cx="1435.8" cy="678.3" r="2.7"/><circle cx="1415.7" cy="678.0" r="1.6"/><circle cx="1464.3" cy="683.4" r="1.9"/><circle cx="1474.2" cy="685.5" r="3.0"/><circle cx="1435.3" cy="687.9" r="1.6"/><circle cx="1446.3" cy="690.4" r="1.6"/><circle cx="1422.1" cy="691.4" r="1.3"/><circle cx="1456.5" cy="696.0" r="1.3"/><circle cx="1345.6" cy="743.5" r="2.7"/><circle cx="1363.3" cy="744.6" r="2.7"/><circle cx="1370.6" cy="747.8" r="2.1"/><circle cx="1383.4" cy="747.6" r="2.7"/><circle cx="1355.5" cy="750.3" r="1.9"/><circle cx="1350.9" cy="754.6" r="1.6"/><circle cx="1360.9" cy="757.0" r="1.6"/><circle cx="1359.3" cy="762.1" r="2.4"/><circle cx="1366.8" cy="764.8" r="2.4"/><circle cx="1378.3" cy="760.5" r="2.7"/><circle cx="1349.6" cy="768.5" r="2.7"/><circle cx="1359.8" cy="772.3" r="2.4"/><circle cx="1374.0" cy="770.7" r="2.7"/></g>
<g fill="#12b488"><circle cx="1246.5" cy="496.2" r="2.7"/><circle cx="1252.1" cy="506.7" r="3.0"/><circle cx="1260.4" cy="503.2" r="2.7"/><circle cx="1246.2" cy="515.3" r="2.7"/><circle cx="1261.0" cy="538.6" r="3.2"/><circle cx="1268.0" cy="573.3" r="2.1"/><circle cx="1253.5" cy="594.8" r="3.2"/><circle cx="1369.5" cy="578.9" r="3.0"/><circle cx="1360.1" cy="634.0" r="2.1"/><circle cx="1369.7" cy="634.8" r="1.6"/><circle cx="1205.1" cy="672.4" r="2.7"/><circle cx="1231.7" cy="672.4" r="1.9"/><circle cx="1181.2" cy="677.2" r="2.1"/><circle cx="1281.7" cy="669.7" r="1.9"/><circle cx="1273.1" cy="677.5" r="1.9"/><circle cx="1310.1" cy="673.4" r="2.4"/><circle cx="1277.4" cy="705.1" r="3.2"/><circle cx="1270.9" cy="712.1" r="1.6"/><circle cx="1246.2" cy="720.2" r="2.1"/><circle cx="1471.0" cy="698.7" r="2.4"/></g>
<g fill="#ee3c4c"><circle cx="1440.1" cy="667.8" r="1.9"/></g>
<circle cx="1332.7" cy="626.7" r="5.6" fill="#bfe4fb"/><circle cx="1332.7" cy="626.7" r="4.3" fill="#2ba4f4"/>
</svg>
<button type="button" class="btn" style="left:28.0px;top:446.0px;width:166px;height:38px;background:#0a8ff0"><span class="t" style="left:12.50px;top:7px;font-size:21px;transform:scaleX(0.9332);font-weight:700;color:#ffffff;">View full report</span></button>
<span class="t" style="left:27.14px;top:17px;font-size:21.8px;transform:scaleX(1.0564);font-weight:700;">Network Graph</span>
<span class="t" style="left:155.00px;top:86px;font-size:20.4px;font-weight:700;">Moderate</span>
<span class="t" style="left:191.95px;top:272px;font-size:18.4px;transform:scaleX(1.0462);font-weight:700;color:#0e80d8;-webkit-text-stroke:0;">healthline.com</span>
</section>
<section class="card" id="referring-domains" style="left:20px;top:865px;width:768px;height:421px;border-radius:7px 7px 0 0;">
<div class="hr" style="top:55px"></div>
<svg class="ico" style="left:245.5px;top:20.2px" width="9" height="17" viewBox="0 0 9 17"><circle cx="4.9" cy="2.3" r="1.9" fill="#a9abb6"/><path d="M0.6 5.7H5.7L4.4 14.3H7.9V16.2H1.3L2.9 7.6H0.6Z" fill="#a9abb6"/></svg>
<div class="abs" style="left:619.0px;top:120.0px;width:24.5px;height:4px;background:#0b69c0"></div>
<svg class="g" width="768" height="421" viewBox="20 865 768 421">
<line x1="144.0" x2="732.5" y1="1026.50" y2="1026.50" stroke="#e0e1e9" stroke-width="1"/>
<line x1="144.0" x2="732.5" y1="1069.70" y2="1069.70" stroke="#e0e1e9" stroke-width="1"/>
<line x1="144.0" x2="732.5" y1="1112.90" y2="1112.90" stroke="#e0e1e9" stroke-width="1"/>
<line x1="144.0" x2="732.5" y1="1156.10" y2="1156.10" stroke="#e0e1e9" stroke-width="1"/>
<polygon points="144.0,1199.3 144.0,1163.4 198.0,1177.4 250.5,1155.0 304.0,1148.2 357.0,1169.5 411.0,1162.8 464.5,1121.8 518.0,1085.4 571.6,1075.6 624.0,1086.0 677.0,1068.0 732.0,1042.6 732.0,1199.3" fill="#2a9df0" fill-opacity="0.175"/>
<line x1="144.0" x2="732.5" y1="1199.30" y2="1199.30" stroke="#a3a9b5" stroke-width="1.2"/>
<clipPath id="clip-rd"><rect x="144.0" y="1006.5" width="588.0" height="202.8"/></clipPath>
<polyline clip-path="url(#clip-rd)" points="144.0,1163.4 198.0,1177.4 250.5,1155.0 304.0,1148.2 357.0,1169.5 411.0,1162.8 464.5,1121.8 518.0,1085.4 571.6,1075.6 624.0,1086.0 677.0,1068.0 732.0,1042.6" fill="none" stroke="#2ea8ee" stroke-width="3.9" stroke-linejoin="round" stroke-linecap="square"/>
</svg>
<span class="t" style="left:26.47px;top:18px;font-size:21.8px;transform:scaleX(1.0290);font-weight:700;">Referring Domains</span>
<span class="t" style="left:619.58px;top:93px;font-size:20px;transform:scaleX(0.9200);letter-spacing:-0.297px;">1Y</span>
<span class="t" style="left:666.50px;top:93px;font-size:20px;transform:scaleX(1.0160);">All Time</span>
<span class="t" style="left:60.70px;top:154px;font-size:17.3px;transform:scaleX(0.9918);color:#6c6e79;">600K</span>
<span class="t" style="left:62.00px;top:197px;font-size:17.3px;transform:scaleX(0.9600);color:#6c6e79;">570K</span>
<span class="t" style="left:60.70px;top:240px;font-size:17.3px;transform:scaleX(0.9918);color:#6c6e79;">540K</span>
<span class="t" style="left:63.80px;top:283px;font-size:17.3px;transform:scaleX(0.9200);letter-spacing:-0.060px;color:#6c6e79;">510K</span>
<span class="t" style="left:60.70px;top:326px;font-size:17.3px;transform:scaleX(0.9918);color:#6c6e79;">480K</span>
<span class="t" style="left:84.95px;top:352px;font-size:17.3px;transform:scaleX(1.0505);color:#6c6e79;">Mar 2023</span>
<span class="t" style="left:190.46px;top:352px;font-size:17.3px;transform:scaleX(1.0433);color:#6c6e79;">May 2023</span>
<span class="t" style="left:303.00px;top:352px;font-size:17.3px;transform:scaleX(1.0351);color:#6c6e79;">Jul 2023</span>
<span class="t" style="left:407.00px;top:352px;font-size:17.3px;transform:scaleX(1.0220);color:#6c6e79;">Sep 2023</span>
<span class="t" style="left:512.46px;top:352px;font-size:17.3px;transform:scaleX(1.0433);color:#6c6e79;">Nov 2023</span>
<span class="t" style="left:659.99px;top:352px;font-size:17.3px;transform:scaleX(1.0081);color:#6c6e79;">Feb 2024</span>
</section>
<section class="card" id="backlinks" style="left:809px;top:865px;width:769px;height:421px;border-radius:7px 7px 0 0;">
<div class="hr" style="top:55px"></div>
<svg class="ico" style="left:150.7px;top:20.2px" width="9" height="17" viewBox="0 0 9 17"><circle cx="4.9" cy="2.3" r="1.9" fill="#a9abb6"/><path d="M0.6 5.7H5.7L4.4 14.3H7.9V16.2H1.3L2.9 7.6H0.6Z" fill="#a9abb6"/></svg>
<div class="abs" style="left:619.5px;top:120.0px;width:25px;height:4px;background:#0b69c0"></div>
<svg class="g" width="769" height="421" viewBox="809 865 769 421">
<line x1="934.0" x2="1522.8" y1="1026.50" y2="1026.50" stroke="#e0e1e9" stroke-width="1"/>
<line x1="934.0" x2="1522.8" y1="1069.70" y2="1069.70" stroke="#e0e1e9" stroke-width="1"/>
<line x1="934.0" x2="1522.8" y1="1112.90" y2="1112.90" stroke="#e0e1e9" stroke-width="1"/>
<line x1="934.0" x2="1522.8" y1="1156.10" y2="1156.10" stroke="#e0e1e9" stroke-width="1"/>
<polygon points="934.0,1199.3 934.0,1192.0 1041.0,1191.6 1148.0,1191.2 1255.0,1191.5 1308.0,1167.2 1361.0,1147.0 1414.5,1091.0 1468.0,1035.0 1522.4,1033.4 1522.4,1199.3" fill="#2a9df0" fill-opacity="0.175"/>
<line x1="934.0" x2="1522.8" y1="1199.30" y2="1199.30" stroke="#a3a9b5" stroke-width="1.2"/>
<clipPath id="clip-bl"><rect x="934.0" y="1006.5" width="588.4" height="202.8"/></clipPath>
<polyline clip-path="url(#clip-bl)" points="934.0,1192.0 1041.0,1191.6 1148.0,1191.2 1255.0,1191.5 1308.0,1167.2 1361.0,1147.0 1414.5,1091.0 1468.0,1035.0 1522.4,1033.4" fill="none" stroke="#2ea8ee" stroke-width="3.9" stroke-linejoin="round" stroke-linecap="square"/>
</svg>
<span class="t" style="left:27.98px;top:18px;font-size:21.8px;transform:scaleX(1.0233);font-weight:700;">Backlinks</span>
<span class="t" style="left:620.07px;top:93px;font-size:20px;transform:scaleX(0.9298);">1Y</span>
<span class="t" style="left:667.50px;top:93px;font-size:20px;transform:scaleX(1.0230);">All Time</span>
<span class="t" style="left:82.00px;top:154px;font-size:17.3px;transform:scaleX(0.9946);color:#6c6e79;">2B</span>
<span class="t" style="left:70.07px;top:197px;font-size:17.3px;transform:scaleX(0.9258);color:#6c6e79;">1.5B</span>
<span class="t" style="left:83.58px;top:240px;font-size:17.3px;transform:scaleX(0.9200);letter-spacing:-0.046px;color:#6c6e79;">1B</span>
<span class="t" style="left:58.00px;top:283px;font-size:17.3px;transform:scaleX(1.0638);color:#6c6e79;">500M</span>
<span class="t" style="left:93.25px;top:326px;font-size:17.3px;color:#6c6e79;">0</span>
<span class="t" style="left:86.45px;top:352px;font-size:17.3px;transform:scaleX(1.0505);color:#6c6e79;">Mar 2023</span>
<span class="t" style="left:191.45px;top:352px;font-size:17.3px;transform:scaleX(1.0501);color:#6c6e79;">May 2023</span>
<span class="t" style="left:304.50px;top:352px;font-size:17.3px;transform:scaleX(1.0429);color:#6c6e79;">Jul 2023</span>
<span class="t" style="left:408.50px;top:352px;font-size:17.3px;transform:scaleX(1.0289);color:#6c6e79;">Sep 2023</span>
<span class="t" style="left:513.45px;top:352px;font-size:17.3px;transform:scaleX(1.0502);color:#6c6e79;">Nov 2023</span>
<span class="t" style="left:660.98px;top:352px;font-size:17.3px;transform:scaleX(1.0150);color:#6c6e79;">Feb 2024</span>
</section>
</div>
</body>
</html>
